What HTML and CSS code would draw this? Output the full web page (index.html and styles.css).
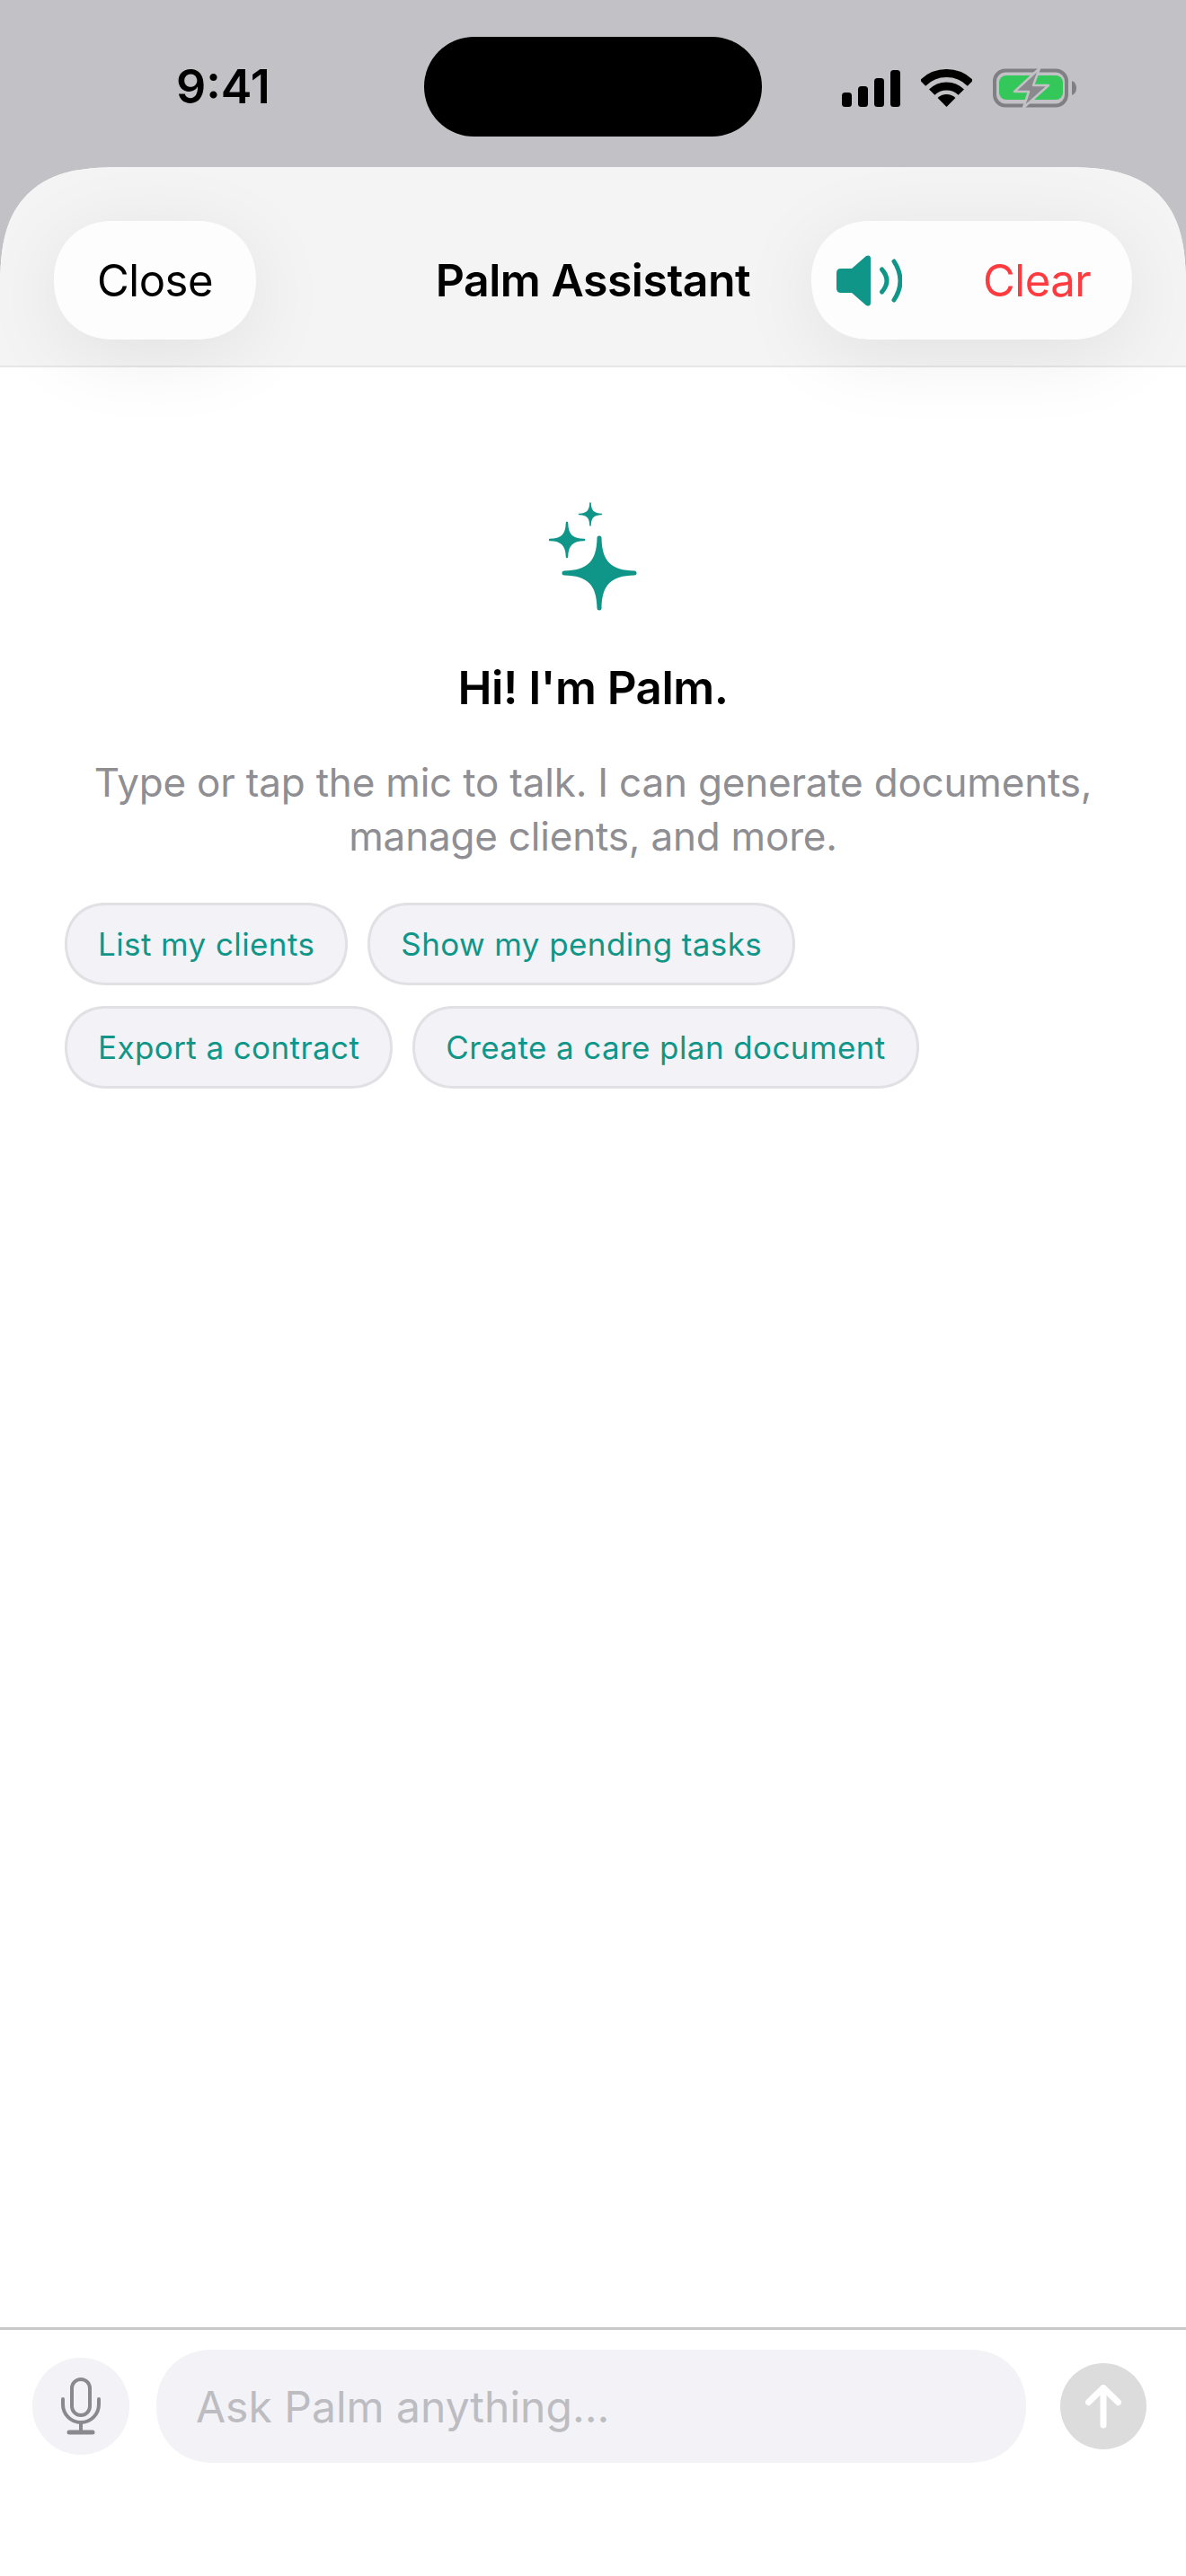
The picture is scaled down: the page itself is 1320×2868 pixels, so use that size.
FILE: index.html
```html
<!DOCTYPE html>
<html lang="en">
<head>
    <meta charset="UTF-8">
    <meta name="viewport" content="width=device-width, initial-scale=1.0">
    <title>Palm Assistant</title>
    <link rel="stylesheet" href="styles.css">
</head>
<body>
    <!-- Status bar -->
    <div class="status-bar">
        <span class="time">9:41</span>
        <div class="island"></div>
        <div class="status-icons">
            <svg class="signal" width="65" height="41" viewBox="0 0 65 41">
                <rect x="0" y="25" width="11" height="16" rx="3.5"/>
                <rect x="18" y="18" width="11" height="23" rx="3.5"/>
                <rect x="36" y="9" width="11" height="32" rx="3.5"/>
                <rect x="54" y="0" width="11" height="41" rx="3.5"/>
            </svg>
            <svg class="wifi" width="57" height="42" viewBox="0 0 57 42">
                <path d="M28.5 42 L18.6 32.1 A14 14 0 0 1 38.4 32.1 Z"/>
                <path class="wifi-arc" d="M12.2 25.7 A23 23 0 0 1 44.8 25.7"/>
                <path class="wifi-arc" d="M2 15.5 A37.5 37.5 0 0 1 55 15.5"/>
            </svg>
            <svg class="battery" width="93" height="46" viewBox="0 0 93 46">
                <rect x="2" y="3.500" width="80" height="39" rx="12" fill="none" stroke="#808084" stroke-width="4"/>
                <rect x="7" y="8" width="71" height="27" rx="8" fill="#34c759" transform="translate(0 1)"/>
                <path d="M88 15 Q93 17 93 23 Q93 29 88 31 Z" fill="#808084"/>
                <path d="M52 1 L24 27 H40 L34 45 L62 20 H45 Z" fill="#8a8a8e" stroke="#c2c1c6" stroke-width="2.500" stroke-linejoin="round"/>
            </svg>
        </div>
    </div>

    <!-- Sheet -->
    <div class="sheet">
        <header class="sheet-header">
            <div class="header-left">
                <button class="pill-button close-button">Close</button>
            </div>
            <h1 class="sheet-title">Palm Assistant</h1>
            <div class="header-right">
                <div class="pill-button action-group">
                    <svg class="speaker" width="73" height="57" viewBox="0 0 73 57">
                        <path d="M5 15 H17 L33 1 Q38 -1 38 4 V53 Q38 58 33 56 L17 42 H5 Q0 42 0 37 V20 Q0 15 5 15 Z" fill="#0f9688"/>
                        <path d="M50.500 16 Q61.500 28.500 50.500 41" fill="none" stroke="#0f9688" stroke-width="5" stroke-linecap="round"/>
                        <path d="M64 7 Q78 28.500 64 50" fill="none" stroke="#0f9688" stroke-width="5" stroke-linecap="round"/>
                    </svg>
                    <span class="clear-label">Clear</span>
                </div>
            </div>
        </header>

        <main class="chat-body">
            <svg class="sparkles" width="98" height="121" viewBox="0 0 98 121">
                <defs>
                    <path id="star" d="M2.500 -39 C3 -13 13 -3 39 -2.500 A2.500 2.500 0 0 1 39 2.500 C13 3 3 13 2.500 39 A2.500 2.500 0 0 1 -2.500 39 C-3 13 -13 3 -39 2.500 A2.500 2.500 0 0 1 -39 -2.500 C-13 -3 -3 -13 -2.500 -39 A2.500 2.500 0 0 1 2.500 -39 Z"/>
                </defs>
                <use href="#star" transform="translate(56 79) scale(1.0)"/>
                <use href="#star" transform="translate(20 42) scale(0.49)"/>
                <use href="#star" transform="translate(46 13.500) scale(0.32)"/>
            </svg>
            <h2 class="greeting">Hi! I'm Palm.</h2>
            <p class="intro">Type or tap the mic to talk. I can generate documents, manage clients, and more.</p>
            <div class="chips">
                <button class="chip">List my clients</button>
                <button class="chip">Show my pending tasks</button>
                <button class="chip">Export a contract</button>
                <button class="chip">Create a care plan document</button>
            </div>
        </main>

        <!-- Input row -->
        <footer class="composer">
            <button class="mic-button" aria-label="Voice input">
                <svg width="44" height="64" viewBox="0 0 44 64" fill="none" stroke="#8a8a8e" stroke-width="4">
                    <rect x="12" y="2" width="20" height="40" rx="10"/>
                    <path d="M2 24 V30 A20 20 0 0 0 42 30 V24" stroke-linecap="round"/>
                    <path d="M22 50 V60"/>
                    <path d="M9 61 H35" stroke-width="5" stroke-linecap="round"/>
                </svg>
            </button>
            <div class="ask-field"><span>Ask Palm anything...</span></div>
            <button class="send-button" aria-label="Send">
                <svg width="40" height="49" viewBox="0 0 40 49" fill="none" stroke="#fff" stroke-width="7" stroke-linecap="round" stroke-linejoin="round">
                    <path d="M20 45 V4"/>
                    <path d="M3.500 19.500 L20 3.500 L36.500 19.500"/>
                </svg>
            </button>
        </footer>
    </div>
</body>
</html>
```

FILE: styles.css
```css
/* General styling */
* {
    box-sizing: border-box;
}

html, body {
    height: 100%;
}

body {
    margin: 0;
    width: 1320px;
    height: 2868px;
    display: flex;
    flex-direction: column;
    background-color: #c2c1c6;
    font-family: Inter, 'Liberation Sans', sans-serif;
    color: #000;
    overflow: hidden;
}

button {
    font-family: inherit;
    border: none;
    padding: 0;
    margin: 0;
    cursor: pointer;
}

/* Status bar */
.status-bar {
    height: 186px;
    flex-shrink: 0;
    display: flex;
    align-items: flex-start;
    padding: 41px 0 0 196px;
}

.time {
    width: 276px;
    height: 111px;
    line-height: 111px;
    font-size: 52px;
    font-weight: 600;
}

.island {
    width: 376px;
    height: 111px;
    border-radius: 56px;
    background-color: #000;
}

.status-icons {
    display: flex;
    align-items: center;
    margin-left: 89px;
    margin-top: 34px;
}

.signal {
    display: block;
}

.wifi {
    display: block;
    margin-left: 23px;
}

.wifi-arc {
    fill: none;
    stroke: #000;
    stroke-width: 9;
}

.battery {
    display: block;
    margin-left: 23px;
}

/* Sheet */
.sheet {
    flex: 1;
    min-height: 0;
    display: flex;
    flex-direction: column;
    background-color: #fff;
    border-radius: 140px 140px 0 0;
    corner-shape: superellipse(1.5);
    overflow: hidden;
}

.sheet-header {
    height: 223px;
    flex-shrink: 0;
    display: grid;
    grid-template-columns: 1fr auto 1fr;
    align-items: center;
    padding: 31px 60px 0;
    background-color: #f4f4f5;
    border-bottom: 2px solid #e6e6e6;
    position: relative;
    z-index: 1;
}

.header-left {
    display: flex;
    justify-content: flex-start;
}

.header-right {
    display: flex;
    justify-content: flex-end;
}

.pill-button {
    height: 132px;
    border-radius: 66px;
    corner-shape: superellipse(1.1);
    background-color: #fdfdfd;
    box-shadow: 0 16px 90px rgba(0, 0, 0, 0.08);
    font-size: 49px;
    letter-spacing: -0.5px;
    color: #000;
}

.close-button {
    width: 225px;
}

.sheet-title {
    margin: 0;
    font-size: 50px;
    font-weight: 600;
    letter-spacing: -0.5px;
}

.action-group {
    width: 357px;
    display: flex;
    align-items: center;
    padding-left: 28px;
}

.speaker {
    display: block;
    margin-right: 90px;
}

.clear-label {
    color: #ff3b3f;
}

/* Empty state */
.chat-body {
    flex: 1;
    display: flex;
    flex-direction: column;
    align-items: center;
    padding: 150px 72px 0;
}

.sparkles {
    display: block;
    fill: #0f9688;
}

.greeting {
    margin: 56px 0 0;
    font-size: 51px;
    line-height: 60px;
    font-weight: 600;
    letter-spacing: -0.5px;
}

.intro {
    margin: 45px 0 0;
    width: 1150px;
    font-size: 44px;
    line-height: 60px;
    letter-spacing: -0.2px;
    text-align: center;
    color: #8e8e93;
}

.chips {
    align-self: stretch;
    display: flex;
    flex-wrap: wrap;
    gap: 23px 22px;
    margin-top: 44px;
}

.chip {
    height: 92px;
    padding: 0 34px;
    border: 3px solid #e0e0e5;
    border-radius: 46px;
    corner-shape: superellipse(1.1);
    background-color: #f2f2f7;
    color: #0f9688;
    font-size: 35px;
    letter-spacing: 0.4px;
}

/* Input row */
.composer {
    flex-shrink: 0;
    height: 277px;
    display: flex;
    align-items: flex-start;
    padding: 22px 44px 0 36px;
    border-top: 3px solid #c9c9cb;
}

.mic-button {
    width: 108px;
    height: 108px;
    margin-top: 9px;
    border-radius: 50%;
    background-color: #f2f2f7;
    display: flex;
    align-items: center;
    justify-content: center;
}

.ask-field {
    flex: 1;
    height: 126px;
    margin: 0 38px 0 30px;
    padding: 0 44px;
    display: flex;
    align-items: center;
    border-radius: 63px;
    corner-shape: superellipse(1.1);
    background-color: #f2f2f7;
    color: #bcbcc1;
    font-size: 48px;
}

.send-button {
    width: 96px;
    height: 96px;
    margin-top: 15px;
    border-radius: 50%;
    background-color: #dcdcdc;
    display: flex;
    align-items: center;
    justify-content: center;
}
```
